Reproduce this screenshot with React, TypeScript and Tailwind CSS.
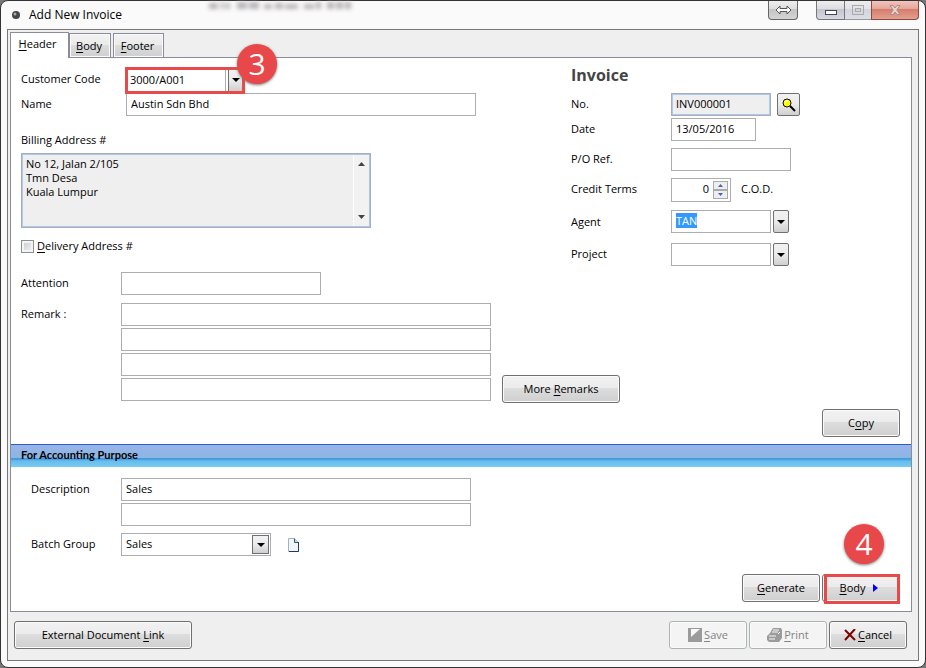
import { FC, InputHTMLAttributes, ReactElement, ReactNode } from "react";

const field = "h-[23px] border border-[#abadb3] bg-white px-1 pb-[2px] outline-none rounded-none";
const face = "bg-linear-to-b from-[#f2f2f2] from-0% via-[#ebebeb] via-50% to-[#cfcfcf]";
const button =
  "flex h-7 items-center justify-center rounded-[3px] border border-[#707070] bg-[linear-gradient(#f2f2f2,#ebebeb_48%,#dddddd_48%,#cfcfcf)] shadow-[inset_0_0_0_1px_#fbfbfb]";
const disabledButton =
  "flex h-7 w-[78px] items-center justify-center rounded-[3px] border border-[#adb2b5] bg-[#f4f4f4] text-[#838383] shadow-[inset_0_0_0_1px_#fbfbfb]";

const Field: FC<InputHTMLAttributes<HTMLInputElement>> = ({ className = "", ...rest }) => (
  <input type="text" className={`${field} ${className}`} {...rest} />
);

const Key: FC<{ children: ReactNode }> = ({ children }) => (
  <span className="underline underline-offset-2">{children}</span>
);

const Arrow: FC = () => (
  <svg width="8" height="4" viewBox="0 0 8 4" aria-hidden="true">
    <path d="M0 0h8L4 4z" fill="#000" />
  </svg>
);

const DropButton: FC<{ label: string }> = ({ label }) => (
  <button
    type="button"
    aria-label={label}
    className={`flex h-[23px] w-4 items-center justify-center rounded-[2px] border border-[#707070] ${face}`}
  >
    <Arrow />
  </button>
);

const Step: FC<{ children: ReactNode; className: string }> = ({ children, className }) => (
  <span
    className={`absolute z-10 flex size-10 items-center justify-center rounded-full bg-[#e84849] font-['Open_Sans',sans-serif] text-[30px] leading-10 text-white shadow-[0_1px_3px_#777] ${className}`}
  >
    {children}
  </span>
);

// faint shapes of the window behind, seen through the glass title bar
const GlassSmudge: FC = () => (
  <svg width="150" height="16" viewBox="0 0 150 16" className="mr-auto ml-[84px] blur-[2px]" fill="#b9b4b8" aria-hidden="true">
    <path d="M3 2h9v6H3zM15 1h3v7h-3zM20 2h4v6h-4zM31 1h10v7H31zM43 1h10v7H43zM58 3h8v5h-8zM69 2h8v6h-8zM79 3h13v5H79zM98 3h10v5H98zM110 1h5v7h-5zM121 1h7v7h-7zM130 1h7v7h-7zM139 1h6v7h-6z" />
  </svg>
);

const TitleBar: FC = () => (
  <header className="flex h-7 items-start justify-between pl-[5px]">
    <div className="flex h-7 items-center gap-[9px]">
      <svg width="8" height="8" viewBox="0 0 8 8" aria-hidden="true">
        <circle cx="4" cy="4" r="4" fill="#444" />
        <circle cx="3" cy="3" r="1.5" fill="#aaa" />
      </svg>
      <h1 className="text-[12px]">Add New Invoice</h1>
    </div>
    <GlassSmudge />
    <div className="flex text-[#555]">
      <button
        type="button"
        aria-label="Resize"
        className="mr-[18px] flex h-[19px] w-[30px] items-center justify-center rounded-b-[4px] border border-t-0 border-[#666] bg-[linear-gradient(#eee,#ddd_45%,#c4c4c4_45%,#d4d4d4)]"
      >
        <svg width="17" height="10" viewBox="0 0 17 10" aria-hidden="true">
          <path d="M1 5l4-4v2.500h7V1l4 4-4 4V6.500H5V9z" fill="#fff" stroke="#555" />
        </svg>
      </button>
      <button
        type="button"
        aria-label="Minimize"
        className="flex h-[19px] w-[29px] items-center justify-center rounded-bl-[4px] border border-t-0 border-[#777] bg-[linear-gradient(#eee,#dcdce2_45%,#c2c4d0_45%,#d6d9e4)]"
      >
        <svg width="12" height="5" viewBox="0 0 12 5" className="mt-1" aria-hidden="true">
          <rect x=".5" y=".5" width="11" height="4" fill="#fff" stroke="#445" />
        </svg>
      </button>
      <button
        type="button"
        aria-label="Maximize"
        disabled
        className="flex h-[19px] w-[26px] items-center justify-center border-b border-[#999] bg-[linear-gradient(#eee,#e2e2e8_45%,#d2d3dc_45%,#dcdee6)]"
      >
        <svg width="12" height="10" viewBox="0 0 12 10" fill="none" stroke="#aaa" aria-hidden="true">
          <rect x=".5" y=".5" width="11" height="9" />
          <rect x="3.500" y="3.500" width="5" height="3" />
        </svg>
      </button>
      <button
        type="button"
        aria-label="Close"
        className="flex h-[19px] w-12 items-center justify-center rounded-br-[4px] border border-t-0 border-[#8b4a44] bg-[linear-gradient(#f0c4bc,#e6a599_45%,#d77b6a_45%,#e3a090)]"
      >
        <svg width="12" height="10" viewBox="0 0 12 10" aria-hidden="true">
          <path d="M1 .5h3l2 2.500 2-2.500h3L7.800 5 11 9.500H8L6 7 4 9.500H1L4.200 5z" fill="#e4d3d1" stroke="#b08a88" />
        </svg>
      </button>
    </div>
  </header>
);

const CustomerColumn: FC = () => (
  <div className="flex w-[550px] shrink-0 flex-col">
    <div className="flex h-[26px] items-center">
      <label htmlFor="code" className="w-[104px] pb-[2px]">Customer Code</label>
      <div className="relative flex h-[27px] w-[120px] items-center border-[3px] border-[#e84a4a] bg-white">
        <input id="code" type="text" defaultValue="3000/A001" className="h-[21px] w-[98px] border-r border-[#abadb3] px-[2px] pb-[2px] outline-none" />
        <button
          type="button"
          aria-label="Choose customer"
          className={`ml-[2px] flex h-[21px] w-[14px] items-center justify-center border-l border-[#707070] ${face}`}
        >
          <Arrow />
        </button>
        <Step className="-top-[26px] -right-[35px]">3</Step>
      </div>
    </div>
    <div className="flex items-center">
      <label htmlFor="name" className="w-[105px] pb-[2px]">Name</label>
      <Field id="name" defaultValue="Austin Sdn Bhd" className="w-[350px]" />
    </div>
    <label htmlFor="billing" className="mt-4 mb-[5px]">Billing Address #</label>
    <div className="flex h-[75px] w-[350px] border border-[#abadb3] bg-[#efefef] p-px shadow-[inset_0_0_0_1px_#a9c9ee]">
      <textarea
        id="billing"
        readOnly
        defaultValue={"No 12, Jalan 2/105\nTmn Desa\nKuala Lumpur"}
        className="m-px h-[70px] flex-1 resize-none overflow-hidden px-[2px] pt-px leading-[14px] outline-none"
      />
      <div className="flex w-4 flex-col items-center justify-between border-l border-white bg-[#f2f2f2] py-[7px]">
        <svg width="7" height="4" viewBox="0 0 7 4" aria-hidden="true"><path d="M0 4h7L3.500 0z" fill="#444" /></svg>
        <svg width="7" height="4" viewBox="0 0 7 4" aria-hidden="true"><path d="M0 0h7L3.500 4z" fill="#444" /></svg>
      </div>
    </div>
    <label className="mt-[10px] flex items-center gap-[3px]">
      <input
        type="checkbox"
        className="size-[13px] appearance-none border border-[#8e8f8f] bg-linear-to-br from-[#c4c8d0] to-[#f6f6f6] shadow-[inset_0_0_0_2px_#f4f4f4]"
      />
      <span><Key>D</Key>elivery Address #</span>
    </label>
    <div className="mt-[18px] flex items-center">
      <label htmlFor="attention" className="w-[100px] pb-[2px]">Attention</label>
      <Field id="attention" className="w-[200px]" />
    </div>
    <div className="mt-2 flex w-max">
      <label htmlFor="remark" className="w-[100px] pt-[3px]">Remark :</label>
      <div className="flex flex-col gap-[2px]">
        <Field id="remark" className="w-[370px]" />
        <Field aria-label="Remark 2" className="w-[370px]" />
        <Field aria-label="Remark 3" className="w-[370px]" />
        <Field aria-label="Remark 4" className="w-[370px]" />
      </div>
      <button type="button" className={`${button} -mb-[2px] ml-[11px] w-[118px] self-end`}>
        <span>More <Key>R</Key>emarks</span>
      </button>
    </div>
  </div>
);

const InvoiceColumn: FC = () => (
  <div className="flex flex-1 flex-col">
    <h2 className="h-[26px] text-[16px] leading-4 font-bold text-[#444]">Invoice</h2>
    <div className="flex items-center">
      <label htmlFor="number" className="w-[100px] pb-[2px]">No.</label>
      <input
        id="number"
        type="text"
        readOnly
        defaultValue="INV000001"
        className="h-[23px] w-[100px] border border-[#abadb3] bg-[#efefef] px-1 pb-[2px] shadow-[inset_0_0_0_1px_#a9c9ee] outline-none"
      />
      <button
        type="button"
        aria-label="Find number"
        className={`ml-[6px] flex size-[23px] items-center justify-center rounded-[2px] border border-[#707070] ${face}`}
      >
        <svg width="14" height="14" viewBox="0 0 14 14" aria-hidden="true">
          <path d="M8 8l5 5" stroke="#000" strokeWidth="2" />
          <circle cx="5" cy="5" r="4" fill="#ff0" stroke="#000" />
          <path d="M3 5l1-2h2" stroke="#fff" fill="none" />
        </svg>
      </button>
    </div>
    <div className="mt-[2px] flex items-center">
      <label htmlFor="date" className="w-[100px] pb-[2px]">Date</label>
      <Field id="date" defaultValue="13/05/2016" className="w-[85px]" />
    </div>
    <div className="mt-[7px] flex items-center">
      <label htmlFor="po" className="w-[100px] pb-[2px]">P/O Ref.</label>
      <Field id="po" className="w-[120px]" />
    </div>
    <div className="mt-[7px] flex items-center">
      <label htmlFor="terms" className="w-[100px] pb-[2px]">Credit Terms</label>
      <div className="flex h-6 w-[60px] items-center border border-[#abadb3] pr-[2px]">
        <input id="terms" type="text" defaultValue="0" className="w-[37px] pb-[2px] text-right outline-none" />
        <div className="ml-auto flex flex-col">
          <button type="button" aria-label="More" className="flex h-[9px] w-[15px] items-center justify-center border border-[#aaa] bg-[#eee]">
            <svg width="5" height="3" viewBox="0 0 5 3" aria-hidden="true"><path d="M0 3h5L2.500 0z" fill="#4a63b8" /></svg>
          </button>
          <button type="button" aria-label="Less" className="flex h-[9px] w-[15px] items-center justify-center border border-[#aaa] bg-[#eee]">
            <svg width="5" height="3" viewBox="0 0 5 3" aria-hidden="true"><path d="M0 0h5L2.500 3z" fill="#4a63b8" /></svg>
          </button>
        </div>
      </div>
      <span className="ml-[10px] pb-[2px]">C.O.D.</span>
    </div>
    <div className="mt-2 flex items-center">
      <span id="agent-label" className="w-[100px]">Agent</span>
      <div role="textbox" aria-labelledby="agent-label" tabIndex={0} className={`${field} flex w-[100px] items-center`}>
        <span className="bg-[#3399ff] leading-[15px] text-white">TAN</span>
      </div>
      <span className="w-[2px]" />
      <DropButton label="Choose agent" />
    </div>
    <div className="mt-[10px] flex items-center">
      <label htmlFor="project" className="w-[100px] pb-[2px]">Project</label>
      <Field id="project" className="mr-[2px] w-[100px]" />
      <DropButton label="Choose project" />
    </div>
  </div>
);

const Accounting: FC = () => (
  <section>
    <h2 className="h-[23px] border-t border-[#2a62c4] bg-[linear-gradient(#9ab4e8,#8ab6e4_58%,#3f97dc_58%,#4a9fe0_66%,#66bcec_72%,#76ccf0)] pl-[10px] font-['Lato',sans-serif] leading-[20px] font-bold">
      For Accounting Purpose
    </h2>
    <div className="flex flex-col pt-[11px] pl-5">
      <div className="flex">
        <label htmlFor="description" className="w-[90px] pt-[3px]">Description</label>
        <div className="flex flex-col gap-[2px]">
          <Field id="description" defaultValue="Sales" className="w-[350px]" />
          <Field aria-label="Description 2" className="w-[350px]" />
        </div>
      </div>
      <div className="mt-[7px] flex items-center">
        <label htmlFor="batch" className="w-[90px] pb-[2px]">Batch Group</label>
        <div className="relative">
          <select id="batch" className="h-[23px] w-[150px] appearance-none border border-[#abadb3] bg-white px-1 pb-[2px] outline-none">
            <option>Sales</option>
          </select>
          <span className={`pointer-events-none absolute top-[2px] right-[2px] flex h-[19px] w-[17px] items-center justify-center border border-[#707070] ${face}`}>
            <Arrow />
          </span>
        </div>
        <button type="button" aria-label="New batch group" className="ml-[17px]">
          <svg width="11" height="14" viewBox="0 0 11 14" aria-hidden="true">
            <path d="M.5.5h6l4 4v9H.5z" fill="#f1f6fd" stroke="#9fb2ca" />
            <path d="M6.500.5v4h4" fill="#c5d3e4" stroke="#3d5878" />
            <path d="M10.500 4v9.500H1" fill="none" stroke="#1f3a5f" />
          </svg>
        </button>
      </div>
    </div>
    <div className="mt-[18px] flex justify-end gap-[2px] pr-[11px] pb-[9px]">
      <button type="button" className={`${button} w-[78px]`}>
        <span><Key>G</Key>enerate</span>
      </button>
      <div className="relative">
        <button type="button" className={`${button} w-[78px] pr-1`}>
          <span><Key>B</Key>ody</span>
          <svg width="5" height="8" viewBox="0 0 5 8" className="ml-2" aria-hidden="true"><path d="M0 0l5 4-5 4z" fill="#00f" /></svg>
        </button>
        <span className="pointer-events-none absolute top-0 right-0 h-[30px] w-[76px] border-[3px] border-[#e84a4a]" />
        <Step className="-top-[50px] right-4">4</Step>
      </div>
    </div>
  </section>
);

export default function App(): ReactElement {
  return (
    <div className="min-h-screen bg-[#777] font-['Open_Sans','Noto_Sans',sans-serif] text-[11px] leading-4 text-black">
      <main className="flex min-h-screen flex-col rounded-[8px] border border-[#333] bg-[#fafafa] px-[6px] pb-[6px]">
        <TitleBar />
        <div className="flex flex-1 flex-col border border-[#777] bg-[#efefef] p-[2px]">
          <nav className="flex items-end" role="tablist">
            <button type="button" role="tab" aria-selected="true" className="relative -mb-px h-[26px] w-[59px] border border-b-0 border-[#8b8c99] bg-white pr-1 pb-1">
              <Key>H</Key>eader
            </button>
            <button type="button" role="tab" className="h-6 w-[42px] border border-b-0 border-[#8b8c99] bg-[linear-gradient(#f2f2f2,#ebebeb_48%,#dddddd_48%,#cfcfcf)] pr-[2px] shadow-[inset_0_0_0_1px_#fbfbfb]">
              <Key>B</Key>ody
            </button>
            <button type="button" role="tab" className="ml-[2px] h-6 w-[51px] border border-b-0 border-[#8b8c99] bg-[linear-gradient(#f2f2f2,#ebebeb_48%,#dddddd_48%,#cfcfcf)] pr-[2px] shadow-[inset_0_0_0_1px_#fbfbfb]">
              <Key>F</Key>ooter
            </button>
          </nav>
          <div className="mr-1 border border-[#8b8c99] bg-white">
            <section className="flex pt-[9px] pl-[10px]">
              <CustomerColumn />
              <InvoiceColumn />
            </section>
            <div className="flex justify-end pt-2 pr-[11px] pb-[7px]">
              <button type="button" className={`${button} w-[78px]`}>
                <span>C<Key>o</Key>py</span>
              </button>
            </div>
            <Accounting />
          </div>
          <footer className="flex gap-[2px] pt-[9px] pr-[9px] pb-2 pl-1">
            <button type="button" className={`${button} mr-auto w-[178px]`}>
              <span>External Document <Key>L</Key>ink</span>
            </button>
            <button type="button" disabled className={disabledButton}>
              <svg width="14" height="14" viewBox="0 0 14 14" className="mr-[2px]" aria-hidden="true">
                <path d="M0 0h14v14H0z" fill="#9b9b9b" />
                <path d="M3 1h9L3 9z" fill="#f8f8f8" />
              </svg>
              <span><Key>S</Key>ave</span>
            </button>
            <button type="button" disabled className={disabledButton}>
              <svg width="15" height="14" viewBox="0 0 15 14" className="mr-[2px]" aria-hidden="true">
                <path d="M6 0h8l1 2v8l-3 4H2l-2-2V8l3-3z" fill="#9b9b9b" />
                <path d="M6 2h6M5 4h6M2 8h7M2 11h6M11 6l2-2" stroke="#f8f8f8" />
              </svg>
              <span><Key>P</Key>rint</span>
            </button>
            <button type="button" className={`${button} w-[78px]`}>
              <svg width="12" height="12" viewBox="0 0 12 12" className="mr-[2px]" aria-hidden="true">
                <path d="M1 1l10 10M11 0L1 11" stroke="#800000" strokeWidth="2" />
              </svg>
              <span><Key>C</Key>ancel</span>
            </button>
          </footer>
        </div>
      </main>
    </div>
  );
}
